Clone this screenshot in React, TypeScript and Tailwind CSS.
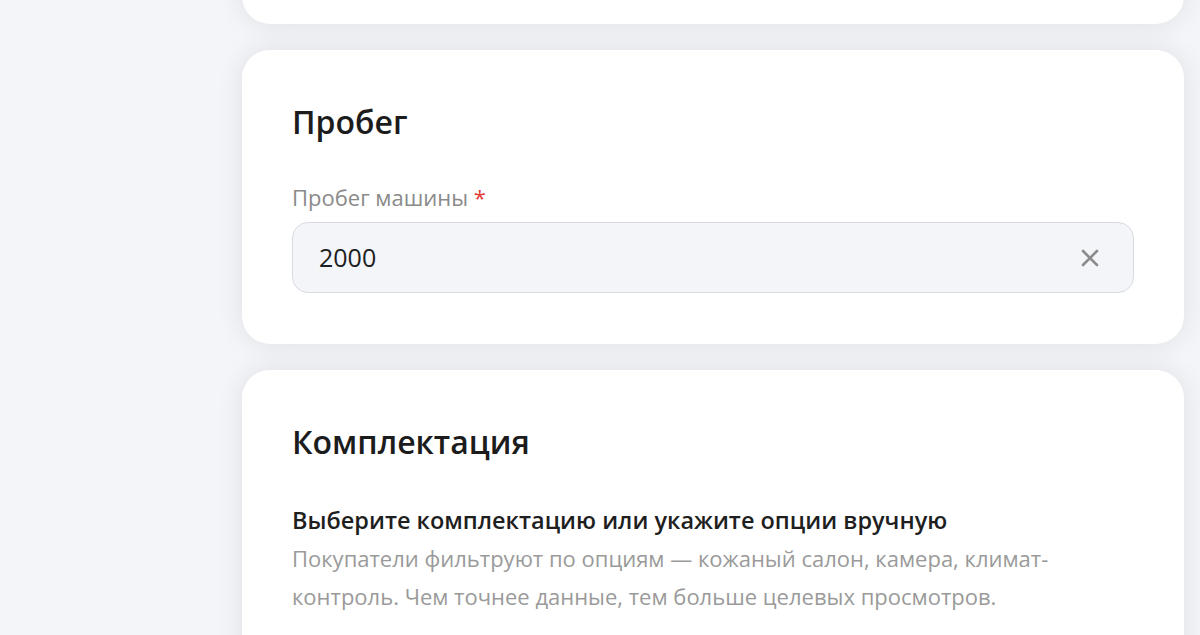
import React from "react";

function ClearIcon() {
  return (
    <svg width="22" height="22" viewBox="0 0 22 22" fill="none" stroke="#8c8c8c" strokeWidth="2.6" strokeLinecap="round">
      <path d="M4 4 L18 18 M18 4 L4 18" />
    </svg>
  );
}

export default function App() {
  return (
    <div
      className="min-h-[635px] h-[635px] overflow-hidden bg-[#f4f5f8] pl-[242px] pr-[16px]"
      style={{ fontFamily: '"Open Sans", "Noto Sans", sans-serif' }}
    >
      <div className="flex flex-col gap-[26px]">
        {/* previous section, scrolled mostly out of view */}
        <div className="-mt-[100px] h-[124px] rounded-[28px] bg-white shadow-[0_0_28px_rgba(0,0,0,0.09)]" />

        {/* mileage */}
        <section className="rounded-[28px] bg-white px-[50px] pt-[50px] pb-[51px] shadow-[0_0_28px_rgba(0,0,0,0.09)]">
          <h2 className="text-[32px] leading-[44px] font-semibold text-[#1c1c1c]">Пробег</h2>
          <div className="mt-[38px] text-[22px] leading-[30px] text-[#8a8a8a]">
            Пробег машины <span className="text-[#e53935]">*</span>
          </div>
          <div className="mt-[10px] flex h-[71px] items-center justify-between rounded-[16px] border border-[#d8dce2] bg-[#f3f5f8] pl-[26px] pr-[32px]">
            <span className="text-[25px] text-[#202020]">2000</span>
            <ClearIcon />
          </div>
        </section>

        {/* equipment */}
        <section className="rounded-[28px] bg-white px-[50px] pt-[50px] pb-[60px] shadow-[0_0_28px_rgba(0,0,0,0.09)]">
          <h2 className="text-[32px] leading-[44px] font-semibold text-[#1c1c1c]">Комплектация</h2>
          <h3 className="mt-[40px] text-[23.5px] leading-[32px] font-semibold text-[#1f1f1f]">
            Выберите комплектацию или укажите опции вручную
          </h3>
          <p className="mt-[3px] max-w-[780px] text-[22px] leading-[38px] text-[#9a9a9a]">
            Покупатели фильтруют по опциям — кожаный салон, камера, климат-контроль. Чем точнее данные, тем больше целевых просмотров.
          </p>
        </section>
      </div>
    </div>
  );
}
